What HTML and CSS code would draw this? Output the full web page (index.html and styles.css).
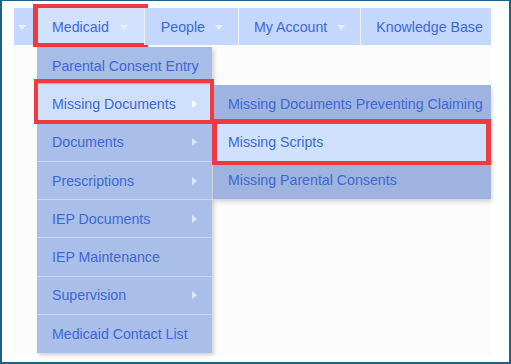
FILE: index.html
```html
<!DOCTYPE html>
<html lang="en">
<head>
    <meta charset="UTF-8">
    <meta name="viewport" content="width=device-width, initial-scale=1.0">
    <title>Medicaid Menu</title>
    <link rel="stylesheet" href="styles.css">
</head>
<body>

    <div class="frame">
        <div class="panel">
            <nav class="topnav">
                <div class="nav-item stub"><span class="caret-down"></span></div>

                <div class="nav-item active marked">
                    Medicaid <span class="caret-down"></span>

                    <ul class="dropdown">
                        <li class="menu-row">Parental Consent Entry</li>
                        <li class="menu-row open marked-row">
                            Missing Documents <span class="caret-right"></span>

                            <ul class="submenu">
                                <li class="sub-row">Missing Documents Preventing Claiming</li>
                                <li class="sub-row open marked-sub">Missing Scripts</li>
                                <li class="sub-row">Missing Parental Consents</li>
                            </ul>
                        </li>
                        <li class="menu-row">Documents <span class="caret-right"></span></li>
                        <li class="menu-row">Prescriptions <span class="caret-right"></span></li>
                        <li class="menu-row">IEP Documents <span class="caret-right"></span></li>
                        <li class="menu-row">IEP Maintenance</li>
                        <li class="menu-row">Supervision <span class="caret-right"></span></li>
                        <li class="menu-row">Medicaid Contact List</li>
                    </ul>
                </div>

                <div class="nav-item people">People <span class="caret-down"></span></div>
                <div class="nav-item">My Account <span class="caret-down"></span></div>
                <div class="nav-item last">Knowledge Base</div>
            </nav>
        </div>
    </div>

</body>
</html>
```

FILE: styles.css
```css
body {
    margin: 0;
    font-family: "Liberation Sans", Arial, sans-serif;
    font-size: 14.2px;
    color: #3d69d4;
    background: #ffffff;
}

.frame {
    width: 511px;
    height: 364px;
    box-sizing: border-box;
    border: 2px solid #1f6086;
    border-top-width: 1px;
    padding: 7px 18px 6px 12px;
    background: #ffffff;
}

.panel {
    height: 100%;
    background: #fcfcfc;
}

.topnav {
    display: flex;
    height: 37px;
    background: #c4d7fc;
}

.nav-item {
    position: relative;
    display: flex;
    align-items: center;
    gap: 10px;
    padding: 0 15px;
    border-left: 1px solid #eef3ff;
    background: #c4d7fc;
}

.nav-item.stub {
    width: 22px;
    padding: 0 0 0 4px;
    border-left: none;
    box-sizing: border-box;
}

.nav-item.active {
    gap: 11px;
    padding-right: 16px;
    background: #d1e1fe;
    border-left-color: #c4d7fc;
}

.nav-item.people {
    padding-left: 16px;
}

.nav-item.last {
    padding-right: 6px;
}

.caret-down {
    width: 0;
    height: 0;
    border-left: 4px solid transparent;
    border-right: 4px solid transparent;
    border-top: 5px solid #eaf1ff;
    margin-top: 2px;
}

.caret-right {
    width: 0;
    height: 0;
    border-top: 4px solid transparent;
    border-bottom: 4px solid transparent;
    border-left: 5px solid #dce6fb;
    margin-left: auto;
    margin-right: 15px;
}

/* red annotation boxes */
.marked::after,
.marked-row::after,
.marked-sub::after {
    content: "";
    position: absolute;
    border: 4px solid #f03a3e;
    pointer-events: none;
}

.marked::after {
    top: -4px;
    bottom: -2px;
    left: -4px;
    right: -4px;
    border-left-width: 5px;
}

.marked-row::after {
    top: -6px;
    bottom: -1px;
    left: -3px;
    right: -2px;
}

.marked-sub::after {
    top: -4px;
    bottom: -4px;
    left: -1px;
    right: 0;
    border-width: 5px 5px 4px 5px;
}

.dropdown {
    position: absolute;
    top: 39px;
    left: 0;
    width: 175px;
    margin: 0;
    padding: 0;
    list-style: none;
    box-shadow: 2px 2px 4px rgba(0, 0, 0, 0.18);
    z-index: 2;
}

.menu-row {
    position: relative;
    display: flex;
    align-items: center;
    height: 38.3px;
    box-sizing: border-box;
    padding-left: 15px;
    background: #a9bee8;
    border-bottom: 1px solid #c9d7f2;
}

.menu-row:first-child {
    background: #a7bce6;
}

.menu-row:last-child {
    border-bottom: none;
}

.menu-row.open {
    background: #cfe0fd;
}

.menu-row.open .caret-right {
    border-left-color: #ffffff;
}

.submenu {
    position: absolute;
    top: 0;
    left: 176px;
    width: 278px;
    margin: 0;
    padding: 0;
    list-style: none;
    background: #9eb3df;
    box-shadow: 1px 3px 4px rgba(0, 0, 0, 0.15);
}

.sub-row {
    position: relative;
    display: flex;
    align-items: center;
    height: 37.8px;
    padding-left: 15px;
    white-space: nowrap;
}

.sub-row.open {
    background: #d0e1fd;
}
```
